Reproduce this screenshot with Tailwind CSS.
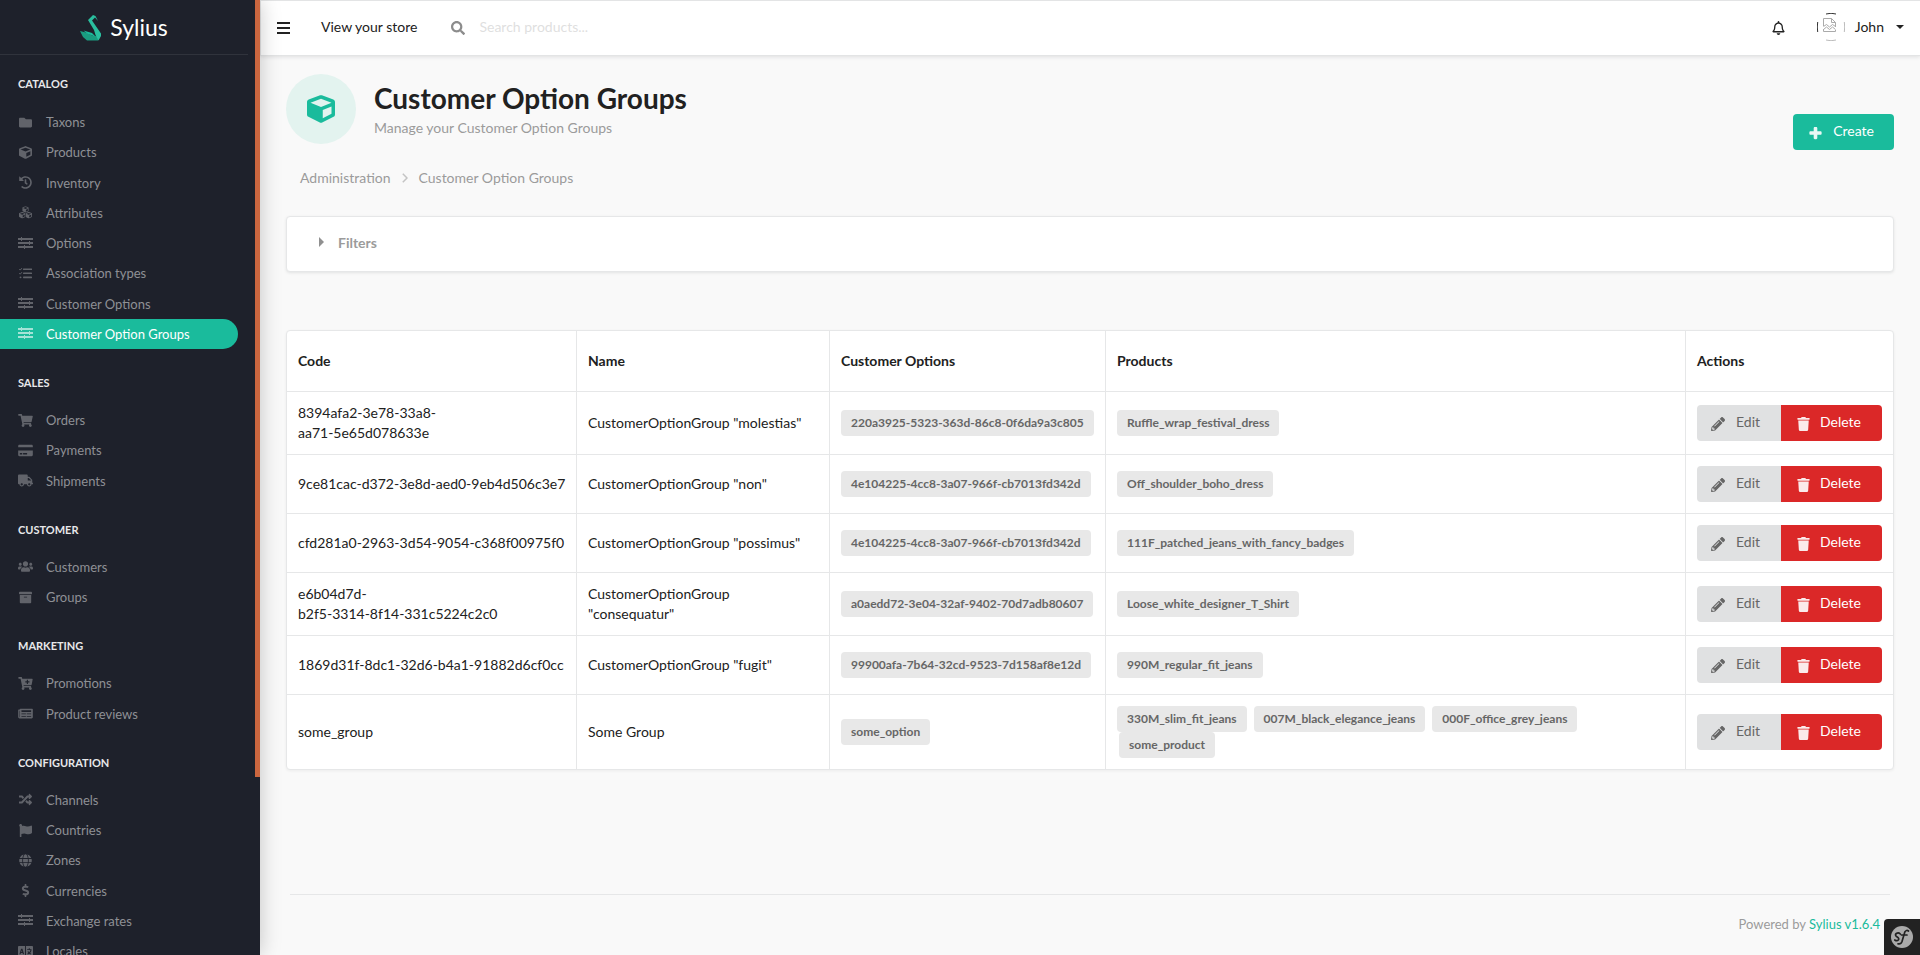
<!DOCTYPE html>
<html lang="en">
<head>
<meta charset="utf-8">
<title>Customer Option Groups | Sylius</title>
<script src="https://cdn.jsdelivr.net/npm/@tailwindcss/browser@4"></script>
</head>
<body class="h-screen overflow-hidden bg-[#f9f9f9] font-['Lato',sans-serif] text-sm leading-5 text-[#212121]">
<svg class="hidden" aria-hidden="true">
  <symbol id="folder" viewBox="0 0 512 512"><path d="M464 128H272l-64-64H48C21.5 64 0 85.500 0 112v288c0 26.500 21.500 48 48 48h416c26.500 0 48-21.500 48-48V176c0-26.500-21.500-48-48-48z"/></symbol>
  <symbol id="cube" viewBox="0 0 512 512"><path d="M239.1 6.300l-208 78c-18.700 7-31.100 25-31.100 45v225.100c0 18.200 10.300 34.800 26.500 42.900l208 104c13.500 6.800 29.400 6.800 42.900 0l208-104c16.300-8.100 26.500-24.800 26.500-42.900V129.300c0-20-12.400-37.900-31.100-44.900l-208-78C262 2.200 250 2.200 239.100 6.300zM256 68.400l192 72v1.100l-192 78-192-78v-1.100l192-72zm32 356V275.500l160-65v133.900l-160 80z"/></symbol>
  <symbol id="history" viewBox="0 0 512 512"><path d="M504 255.531c.253 136.640-111.180 248.372-247.820 248.468-59.015.042-113.223-20.530-155.822-54.911-11.077-8.940-11.905-25.541-1.839-35.607l11.267-11.267c8.609-8.609 22.353-9.551 31.891-1.984C173.062 425.135 212.781 440 256 440c101.705 0 184-82.311 184-184 0-101.705-82.311-184-184-184-48.814 0-93.149 18.969-126.068 49.932l50.754 50.754c10.080 10.080 2.941 27.314-11.313 27.314H24c-8.837 0-16-7.163-16-16V38.627c0-14.254 17.234-21.393 27.314-11.314l49.372 49.372C129.209 34.136 189.552 8 256 8c136.810 0 247.747 110.780 248 247.531zm-180.912 78.784l9.823-12.630c8.138-10.463 6.253-25.542-4.210-33.679L288 256.349V152c0-13.255-10.745-24-24-24h-16c-13.255 0-24 10.745-24 24v135.651l65.409 50.874c10.463 8.137 25.541 6.253 33.679-4.210z"/></symbol>
  <symbol id="cubes" viewBox="0 0 512 512"><use href="#cube" x="128" y="10" width="256" height="256"/><use href="#cube" x="0" y="238" width="256" height="256"/><use href="#cube" x="256" y="238" width="256" height="256"/></symbol>
  <symbol id="sliders" viewBox="0 0 15 13"><path d="M0 1h15v2H0zM0 5h15v2H0zM0 9h15v2H0zM3 0h1v4H3zM11 4h1v4h-1zM6 8h1v4H6z"/></symbol>
  <symbol id="tasks" viewBox="0 0 512 512"><path d="M176 56h320q16 0 16 16v32q0 16-16 16H176q-16 0-16-16V72q0-16 16-16zM176 216h320q16 0 16 16v32q0 16-16 16H176q-16 0-16-16v-32q0-16 16-16zM176 376h320q16 0 16 16v32q0 16-16 16H176q-16 0-16-16v-32q0-16 16-16z"/><circle cx="60" cy="408" r="38"/><path d="M10 84l38 38 68-78M10 244l38 38 68-78" fill="none" stroke="currentColor" stroke-width="38"/></symbol>
  <symbol id="cart" viewBox="0 0 576 512"><path d="M528.120 301.319l47.273-208C578.806 78.301 567.391 64 551.990 64H159.208l-9.166-44.810C147.758 8.021 137.930 0 126.529 0H24C10.745 0 0 10.745 0 24v16c0 13.255 10.745 24 24 24h69.883l70.248 343.435C147.325 417.100 136 435.222 136 456c0 30.928 25.072 56 56 56s56-25.072 56-56c0-15.674-6.447-29.835-16.824-40h209.647C430.447 426.165 424 440.326 424 456c0 30.928 25.072 56 56 56s56-25.072 56-56c0-22.172-12.888-41.332-31.579-50.405l5.517-24.276c3.413-15.018-8.002-29.319-23.403-29.319H218.117l-6.545-32h293.145c11.206 0 20.920-7.754 23.403-18.681z"/></symbol>
  <symbol id="cartplus" viewBox="0 0 576 512"><use href="#cart" width="576" height="512"/><path d="M340 110h44v60h60v44h-60v60h-44v-60h-60v-44h60z" fill="#1e212b"/></symbol>
  <symbol id="card" viewBox="0 0 576 512"><path d="M0 432c0 26.500 21.500 48 48 48h480c26.500 0 48-21.500 48-48V256H0v176zm192-68c0-6.600 5.400-12 12-12h136c6.600 0 12 5.400 12 12v40c0 6.600-5.400 12-12 12H204c-6.600 0-12-5.400-12-12v-40zm-128 0c0-6.600 5.400-12 12-12h72c6.600 0 12 5.400 12 12v40c0 6.600-5.400 12-12 12H76c-6.600 0-12-5.400-12-12v-40zM576 80v48H0V80c0-26.500 21.500-48 48-48h480c26.500 0 48 21.500 48 48z"/></symbol>
  <symbol id="truck" viewBox="0 0 640 512"><path d="M624 352h-16V243.900c0-12.700-5.100-24.900-14.100-33.900L494 110.100c-9-9-21.200-14.100-33.900-14.100H416V48c0-26.500-21.500-48-48-48H48C21.500 0 0 21.500 0 48v320c0 26.500 21.500 48 48 48h16c0 53 43 96 96 96s96-43 96-96h128c0 53 43 96 96 96s96-43 96-96h48c8.800 0 16-7.200 16-16v-32c0-8.800-7.200-16-16-16zM160 464c-26.500 0-48-21.500-48-48s21.500-48 48-48 48 21.500 48 48-21.500 48-48 48zm320 0c-26.500 0-48-21.500-48-48s21.500-48 48-48 48 21.500 48 48-21.500 48-48 48zm80-208H416V144h44.100l99.900 99.900V256z"/></symbol>
  <symbol id="users" viewBox="0 0 640 512"><path d="M96 224c35.300 0 64-28.700 64-64s-28.700-64-64-64-64 28.700-64 64 28.700 64 64 64zm448 0c35.300 0 64-28.700 64-64s-28.700-64-64-64-64 28.700-64 64 28.700 64 64 64zm32 32h-64c-17.600 0-33.500 7.100-45.100 18.600 40.300 22.100 68.900 62 75.100 109.400h66c17.700 0 32-14.300 32-32v-32c0-35.300-28.700-64-64-64zm-256 0c61.900 0 112-50.100 112-112S381.900 32 320 32 208 82.100 208 144s50.100 112 112 112zm76.800 32h-8.300c-20.800 10-43.900 16-68.500 16s-47.600-6-68.500-16h-8.300C179.600 288 128 339.600 128 403.200V432c0 26.500 21.500 48 48 48h288c26.500 0 48-21.500 48-48v-28.800c0-63.600-51.600-115.200-115.200-115.200zm-223.700-13.400C161.500 263.100 145.600 256 128 256H64c-35.300 0-64 28.700-64 64v32c0 17.700 14.300 32 32 32h65.900c6.300-47.400 34.900-87.300 75.200-109.400z"/></symbol>
  <symbol id="archive" viewBox="0 0 512 512"><path d="M32 448c0 17.700 14.300 32 32 32h384c17.700 0 32-14.300 32-32V160H32v288zm160-212c0-6.600 5.400-12 12-12h104c6.600 0 12 5.400 12 12v8c0 6.600-5.400 12-12 12H204c-6.600 0-12-5.400-12-12v-8zM480 32H32C14.300 32 0 46.300 0 64v48c0 8.800 7.200 16 16 16h480c8.800 0 16-7.200 16-16V64c0-17.700-14.300-32-32-32z"/></symbol>
  <symbol id="news" viewBox="0 0 576 512"><path d="M552 64H88c-13.255 0-24 10.745-24 24v8H24c-13.255 0-24 10.745-24 24v272c0 30.928 25.072 56 56 56h472c26.510 0 48-21.490 48-48V88c0-13.255-10.745-24-24-24zM56 400a8 8 0 0 1-8-8V144h16v248a8 8 0 0 1-8 8zm236-16H140c-6.627 0-12-5.373-12-12v-8c0-6.627 5.373-12 12-12h152c6.627 0 12 5.373 12 12v8c0 6.627-5.373 12-12 12zm208 0H348c-6.627 0-12-5.373-12-12v-8c0-6.627 5.373-12 12-12h152c6.627 0 12 5.373 12 12v8c0 6.627-5.373 12-12 12zm-208-96H140c-6.627 0-12-5.373-12-12v-8c0-6.627 5.373-12 12-12h152c6.627 0 12 5.373 12 12v8c0 6.627-5.373 12-12 12zm208 0H348c-6.627 0-12-5.373-12-12v-8c0-6.627 5.373-12 12-12h152c6.627 0 12 5.373 12 12v8c0 6.627-5.373 12-12 12zm0-96H140c-6.627 0-12-5.373-12-12v-40c0-6.627 5.373-12 12-12h360c6.627 0 12 5.373 12 12v40c0 6.627-5.373 12-12 12z"/></symbol>
  <symbol id="random" viewBox="0 0 512 512"><path d="M504.971 359.029c9.373 9.373 9.373 24.569 0 33.941l-80 79.984c-15.010 15.010-40.971 4.490-40.971-16.971V416h-58.785a12.004 12.004 0 0 1-8.773-3.812l-70.556-75.596 53.333-57.143L352 336h32v-39.981c0-21.438 25.943-31.998 40.971-16.971l80 79.981zM12 176h84l52.781 56.551 53.333-57.143-70.556-75.596A11.999 11.999 0 0 0 122.785 96H12c-6.627 0-12 5.373-12 12v56c0 6.627 5.373 12 12 12zm372 0v39.984c0 21.460 25.961 31.980 40.971 16.971l80-79.984c9.373-9.373 9.373-24.569 0-33.941l-80-79.981C409.943 24.021 384 34.582 384 56.019V96h-58.785a12.004 12.004 0 0 0-8.773 3.812L96 336H12c-6.627 0-12 5.373-12 12v56c0 6.627 5.373 12 12 12h110.785c3.326 0 6.503-1.381 8.773-3.812L352 176h32z"/></symbol>
  <symbol id="flag" viewBox="0 0 512 512"><path d="M349.565 98.783C295.978 98.783 251.721 64 184.348 64c-24.955 0-47.309 4.384-68.045 12.013a55.947 55.947 0 0 0 3.586-23.562C118.117 24.015 94.806 1.206 66.338.048 34.345-1.254 8 24.296 8 56c0 19.026 9.497 35.825 24 45.945V488c0 13.255 10.745 24 24 24h16c13.255 0 24-10.745 24-24v-94.400c28.311-12.064 63.582-22.122 114.435-22.122 53.588 0 97.844 34.783 165.217 34.783 48.169 0 86.667-16.294 122.505-40.858C506.840 359.452 512 349.571 512 339.045v-243.100c0-23.393-24.269-38.870-45.485-29.016-34.338 15.948-76.454 31.854-116.950 31.854z"/></symbol>
  <symbol id="globe" viewBox="0 0 496 512"><path d="M336.500 160C322 70.700 287.800 8 248 8s-74 62.700-88.500 152h177zM152 256c0 22.200 1.200 43.500 3.300 64h185.300c2.100-20.500 3.300-41.800 3.300-64s-1.200-43.500-3.300-64H155.300c-2.100 20.500-3.300 41.800-3.300 64zm324.700-96c-28.600-67.900-86.500-120.400-158-141.600 24.400 33.800 41.200 84.700 50 141.600h108zM177.200 18.400C105.800 39.600 47.800 92.100 19.300 160h108c8.700-56.900 25.500-107.800 49.900-141.600zM487.400 192H372.700c2.100 21 3.300 42.500 3.300 64s-1.200 43-3.300 64h114.600c5.500-20.500 8.600-41.800 8.600-64s-3.100-43.500-8.500-64zM120 256c0-21.500 1.200-43 3.300-64H8.600C3.200 212.500 0 233.800 0 256s3.200 43.500 8.600 64h114.600c-2-21-3.200-42.500-3.200-64zm39.500 96c14.500 89.300 48.700 152 88.500 152s74-62.700 88.500-152h-177zm159.300 141.600c71.400-21.200 129.400-73.700 158-141.600h-108c-8.800 56.900-25.600 107.800-50 141.600zM19.300 352c28.600 67.900 86.500 120.400 158 141.600-24.400-33.800-41.200-84.700-50-141.600h-108z"/></symbol>
  <symbol id="dollar" viewBox="0 0 288 512"><path d="M209.200 233.400l-108-31.600C88.700 198.200 80 186.500 80 173.500c0-16.300 13.200-29.500 29.500-29.500h66.300c12.200 0 24.200 3.700 34.200 10.500 6.100 4.100 14.300 3.100 19.500-2l34.800-34c7.100-6.900 6.100-18.400-1.800-24.500C238 74.800 207.400 64.100 176 64V16c0-8.800-7.200-16-16-16h-32c-8.800 0-16 7.200-16 16v48h-2.500C45.800 64-5.400 118.700.5 183.600c4.200 46.100 39.400 83.600 83.800 96.600l102.500 30c12.500 3.700 21.200 15.300 21.200 28.300 0 16.300-13.200 29.500-29.500 29.500h-66.300C100 368 88 364.300 78 357.500c-6.100-4.100-14.300-3.100-19.500 2l-34.800 34c-7.100 6.900-6.100 18.400 1.800 24.500 24.500 19.200 55.100 29.900 86.500 30v48c0 8.800 7.200 16 16 16h32c8.800 0 16-7.200 16-16v-48.200c46.600-.9 90.300-28.600 105.700-72.700 21.500-61.600-14.600-124.800-72.500-141.700z"/></symbol>
  <symbol id="language" viewBox="0 0 16 12"><path fill-rule="evenodd" d="M1 0h6.500v12H1Q0 12 0 11V1Q0 0 1 0zM3.300 3L1.500 9h1.200l.4-1.500h1.800L5.300 9h1.200L4.700 3zM4 4.600l.5 1.900h-1zM8.500 0H15q1 0 1 1v10q0 1-1 1H8.500zM11.500 2.500v1H9.700v1h3.600Q12.900 6 12 6.800L11 5.700l-.9.600L11.100 7.500l-1.300.9.700.9L12 8.300l1.500 1 .6-1-1.200-.8Q14.200 6.300 14.400 4.500v-1h-1.800v-1z"/></symbol>
  <symbol id="search" viewBox="0 0 512 512"><path d="M505 442.700L405.300 343c-4.500-4.500-10.600-7-17-7H372c27.600-35.300 44-79.700 44-128C416 93.100 322.900 0 208 0S0 93.100 0 208s93.100 208 208 208c48.300 0 92.700-16.400 128-44v16.300c0 6.400 2.500 12.500 7 17l99.700 99.700c9.400 9.400 24.600 9.400 33.900 0l28.300-28.300c9.400-9.400 9.400-24.600.1-34zM208 336c-70.700 0-128-57.200-128-128 0-70.700 57.200-128 128-128 70.700 0 128 57.200 128 128 0 70.700-57.200 128-128 128z"/></symbol>
  <symbol id="bell" viewBox="0 0 448 512"><path d="M439.390 362.290c-19.320-20.760-55.470-51.990-55.470-154.290 0-77.700-54.480-139.900-127.940-155.160V32c0-17.670-14.320-32-31.980-32s-31.980 14.330-31.980 32v20.840C118.560 68.100 64.080 130.300 64.080 208c0 102.300-36.150 133.530-55.470 154.290-6 6.450-8.660 14.160-8.610 21.710.11 16.400 12.980 32 32.100 32h383.800c19.120 0 32-15.600 32.100-32 .05-7.550-2.610-15.270-8.610-21.710zM67.530 368c21.220-27.970 44.420-74.330 44.530-159.420 0-.2-.06-.38-.06-.58 0-61.860 50.140-112 112-112s112 50.140 112 112c0 .2-.06.38-.06.58.11 85.100 23.310 131.460 44.530 159.420H67.530zM224 512c35.320 0 63.970-28.650 63.970-64H160.030c0 35.350 28.650 64 63.970 64z"/></symbol>
  <symbol id="pencil" viewBox="0 0 512 512"><path d="M497.900 142.100l-46.100 46.100c-4.700 4.700-12.300 4.700-17 0l-111-111c-4.700-4.700-4.700-12.300 0-17l46.100-46.100c18.700-18.700 49.100-18.700 67.900 0l60.100 60.100c18.800 18.700 18.800 49.100 0 67.900zM284.200 99.800L21.600 362.400.4 483.900c-2.900 16.400 11.400 30.600 27.800 27.800l121.500-21.300 262.600-262.600c4.700-4.700 4.700-12.300 0-17l-111-111c-4.800-4.700-12.400-4.700-17.100 0zM124.100 339.900c-5.500-5.500-5.500-14.300 0-19.800l154-154c5.500-5.500 14.300-5.500 19.800 0s5.500 14.300 0 19.800l-154 154c-5.500 5.500-14.300 5.500-19.800 0zM88 424h48v36.300l-64.500 11.300-31.100-31.100L51.700 376H88v48z"/></symbol>
  <symbol id="trash" viewBox="0 0 448 512"><path d="M432 32H312l-9.400-18.700A24 24 0 0 0 281.100 0H166.800a23.720 23.720 0 0 0-21.400 13.300L136 32H16A16 16 0 0 0 0 48v32a16 16 0 0 0 16 16h416a16 16 0 0 0 16-16V48a16 16 0 0 0-16-16zM53.200 467a48 48 0 0 0 47.900 45h245.800a48 48 0 0 0 47.900-45L416 128H32z"/></symbol>
  <symbol id="plus" viewBox="0 0 448 512"><path d="M408 190H290V72c0-22-18-40-40-40h-52c-22 0-40 18-40 40v118H40c-22 0-40 18-40 40v52c0 22 18 40 40 40h118v118c0 22 18 40 40 40h52c22 0 40-18 40-40V322h118c22 0 40-18 40-40v-52c0-22-18-40-40-40z"/></symbol>
</svg>

<div class="flex h-full">
  <aside class="relative z-10 w-[260px] shrink-0 overflow-hidden bg-[#1e212b] text-[13px] leading-tight shadow-[0_0_20px_rgba(0,0,0,0.22)]">
    <div class="absolute top-0 right-0 h-[777px] w-[5px] bg-[#cb663f]"></div>
    <a href="#" class="mr-3 flex h-[55px] items-center justify-center gap-2 border-b border-[#30333c] text-[23px] text-white">
      <svg class="h-[27px] w-[22px]" viewBox="0 0 22 27"><path fill="#1a9c80" d="M0 17l6 1.500L13 22l7 .5-2 4H7L3 23z"/><path fill="#2abf9f" d="M8 6l5-5 2.500 1L18 7l-3-3.500-3 3L21 19.500V22l-2.500 4.500-3-5.500L14 16z"/><path fill="#1abb9c" d="M3.500 16.500L12 19l4 4-9-3.500z"/></svg>
      <span>Sylius</span>
    </a>
    <nav>
      <h2 class="px-[18px] pt-[21px] pb-4 text-[11px] leading-[15px] font-bold text-[#e8e8ea]">CATALOG</h2>
      <ul class="text-[#8e9095]">
        <li><a href="#" class="flex items-center gap-[13px] py-[7px] pl-[18px]"><svg class="h-[13px] w-[15px] fill-current opacity-60"><use href="#folder"/></svg>Taxons</a></li>
        <li><a href="#" class="flex items-center gap-[13px] py-[7px] pl-[18px]"><svg class="h-[13px] w-[15px] fill-current opacity-60"><use href="#cube"/></svg>Products</a></li>
        <li><a href="#" class="flex items-center gap-[13px] py-[7px] pl-[18px]"><svg class="h-[13px] w-[15px] fill-current opacity-60"><use href="#history"/></svg>Inventory</a></li>
        <li><a href="#" class="flex items-center gap-[13px] py-[7px] pl-[18px]"><svg class="h-[13px] w-[15px] fill-current opacity-60"><use href="#cubes"/></svg>Attributes</a></li>
        <li><a href="#" class="flex items-center gap-[13px] py-[7px] pl-[18px]"><svg class="h-[13px] w-[15px] fill-current opacity-60"><use href="#sliders"/></svg>Options</a></li>
        <li><a href="#" class="flex items-center gap-[13px] py-[7px] pl-[18px]"><svg class="h-[13px] w-[15px] fill-current opacity-60"><use href="#tasks"/></svg>Association types</a></li>
        <li><a href="#" class="flex items-center gap-[13px] py-[7px] pl-[18px]"><svg class="h-[13px] w-[15px] fill-current opacity-60"><use href="#sliders"/></svg>Customer Options</a></li>
        <li><a href="#" aria-current="page" class="mr-[22px] flex items-center gap-[13px] rounded-r-full bg-[#1abb9c] py-[7px] pl-[18px] text-white"><svg class="h-[13px] w-[15px] fill-current opacity-60"><use href="#sliders"/></svg>Customer Option Groups</a></li>
      </ul>
      <h2 class="px-[18px] pt-[26px] pb-[15px] text-[11px] leading-[15px] font-bold text-[#e8e8ea]">SALES</h2>
      <ul class="text-[#8e9095]">
        <li><a href="#" class="flex items-center gap-[13px] py-[7px] pl-[18px]"><svg class="h-[13px] w-[15px] fill-current opacity-60"><use href="#cart"/></svg>Orders</a></li>
        <li><a href="#" class="flex items-center gap-[13px] py-[7px] pl-[18px]"><svg class="h-[13px] w-[15px] fill-current opacity-60"><use href="#card"/></svg>Payments</a></li>
        <li><a href="#" class="flex items-center gap-[13px] py-[7px] pl-[18px]"><svg class="h-[13px] w-[15px] fill-current opacity-60"><use href="#truck"/></svg>Shipments</a></li>
      </ul>
      <h2 class="px-[18px] pt-[26px] pb-[15px] text-[11px] leading-[15px] font-bold text-[#e8e8ea]">CUSTOMER</h2>
      <ul class="text-[#8e9095]">
        <li><a href="#" class="flex items-center gap-[13px] py-[7px] pl-[18px]"><svg class="h-[13px] w-[15px] fill-current opacity-60"><use href="#users"/></svg>Customers</a></li>
        <li><a href="#" class="flex items-center gap-[13px] py-[7px] pl-[18px]"><svg class="h-[13px] w-[15px] fill-current opacity-60"><use href="#archive"/></svg>Groups</a></li>
      </ul>
      <h2 class="px-[18px] pt-[26px] pb-[15px] text-[11px] leading-[15px] font-bold text-[#e8e8ea]">MARKETING</h2>
      <ul class="text-[#8e9095]">
        <li><a href="#" class="flex items-center gap-[13px] py-[7px] pl-[18px]"><svg class="h-[13px] w-[15px] fill-current opacity-60"><use href="#cartplus"/></svg>Promotions</a></li>
        <li><a href="#" class="flex items-center gap-[13px] py-[7px] pl-[18px]"><svg class="h-[13px] w-[15px] fill-current opacity-60"><use href="#news"/></svg>Product reviews</a></li>
      </ul>
      <h2 class="px-[18px] pt-[26px] pb-[15px] text-[11px] leading-[15px] font-bold text-[#e8e8ea]">CONFIGURATION</h2>
      <ul class="text-[#8e9095]">
        <li><a href="#" class="flex items-center gap-[13px] py-[7px] pl-[18px]"><svg class="h-[13px] w-[15px] fill-current opacity-60"><use href="#random"/></svg>Channels</a></li>
        <li><a href="#" class="flex items-center gap-[13px] py-[7px] pl-[18px]"><svg class="h-[13px] w-[15px] fill-current opacity-60"><use href="#flag"/></svg>Countries</a></li>
        <li><a href="#" class="flex items-center gap-[13px] py-[7px] pl-[18px]"><svg class="h-[13px] w-[15px] fill-current opacity-60"><use href="#globe"/></svg>Zones</a></li>
        <li><a href="#" class="flex items-center gap-[13px] py-[7px] pl-[18px]"><svg class="h-[13px] w-[15px] fill-current opacity-60"><use href="#dollar"/></svg>Currencies</a></li>
        <li><a href="#" class="flex items-center gap-[13px] py-[7px] pl-[18px]"><svg class="h-[13px] w-[15px] fill-current opacity-60"><use href="#sliders"/></svg>Exchange rates</a></li>
        <li><a href="#" class="flex items-center gap-[13px] py-[7px] pl-[18px]"><svg class="h-[13px] w-[15px] fill-current opacity-60"><use href="#language"/></svg>Locales</a></li>
      </ul>
    </nav>
  </aside>

  <div class="flex min-w-0 flex-1 flex-col">
    <header class="flex h-14 shrink-0 items-center border border-r-0 border-[#e3e4e5] bg-white pr-4 pl-4 shadow-[0_1px_4px_rgba(34,36,38,0.12)]">
      <button type="button" aria-label="Toggle menu" class="mr-[31px]"><svg class="h-3 w-[13px]" viewBox="0 0 13 12"><path fill="#222" d="M0 0h13v2H0zM0 5h13v2H0zM0 10h13v2H0z"/></svg></button>
      <a href="#" class="mr-[34px] pb-0.5">View your store</a>
      <label for="search" class="mr-3.5"><svg class="h-3.5 w-3.5 fill-[#8c8c8c]"><use href="#search"/></svg></label>
      <input id="search" type="search" placeholder="Search products..." class="mr-auto w-60 pb-0.5 outline-none placeholder:text-[#dfdfdf]">
      <button type="button" aria-label="Notifications" class="mr-8"><svg class="h-3.5 w-[13px] fill-[#222]"><use href="#bell"/></svg></button>
      <button type="button" class="flex items-center pb-0.5">
        <svg class="mr-2.5 h-7 w-7" viewBox="0 0 28 28" fill="none"><g stroke="#aaa"><path d="M6.500 13V5.500h8l4 4V14M14.500 5.500v4h4M6.500 16v2.500h12V17"/><path d="M6.500 13.500l3-2 3 2.500 3-2.500 3 2M6.500 16.500l3-2.500 3 2.500 3-2.500 3 2.500"/></g><path stroke="#333" d="M.7 9q-.8 5 0 10M9 1q5-1.500 10 0"/><path stroke="#bbb" d="M27.300 9q.8 5 0 10M9 27q5 1.500 10 0"/></svg>
        John
        <svg class="ml-3 h-1 w-2" viewBox="0 0 8 4"><path fill="#222" d="M0 0h8L4 4z"/></svg>
      </button>
    </header>

    <main class="flex min-h-0 flex-1 flex-col pr-[26px] pl-[26px]">
      <div class="mt-[18px] flex items-start">
        <div class="mr-[18px] flex h-[70px] w-[70px] items-center justify-center rounded-full bg-[#e3f3ef]"><svg class="h-7 w-7 fill-[#1abb9c]"><use href="#cube"/></svg></div>
        <div class="flex-1">
          <h1 class="mt-1.5 text-[28px] leading-9 font-bold">Customer Option Groups</h1>
          <p class="mt-0.5 text-[#9b9b9b]">Manage your Customer Option Groups</p>
        </div>
        <button type="button" class="mt-10 flex h-9 items-center rounded bg-[#1abb9c] pr-5 pl-4 text-white"><svg class="mt-0.5 mr-[11px] h-3.5 w-[13px] fill-current opacity-90"><use href="#plus"/></svg><span class="pb-0.5">Create</span></button>
      </div>
      <nav aria-label="Breadcrumb" class="mt-[18px] ml-3.5 flex items-center text-[#9b9b9b]">
        <a href="#">Administration</a>
        <svg class="mx-[11px] h-2.5 w-1.5" viewBox="0 0 6 10"><path d="M.8.8L5 5 .8 9.200" fill="none" stroke="#c4c4c4" stroke-width="1.500"/></svg>
        <span>Customer Option Groups</span>
      </nav>
      <section class="mt-7 rounded border border-[#e6e7e8] bg-white shadow-[0_1px_3px_rgba(34,36,38,0.1)]">
        <button type="button" aria-expanded="false" class="flex w-full items-center pt-4 pb-[18px] pl-8 font-bold text-[#9b9b9b]"><svg class="mr-3.5 mb-0.5 h-2.5 w-[5px]" viewBox="0 0 5 10"><path fill="#909090" d="M0 0l5 5-5 5z"/></svg>Filters</button>
      </section>

      <table class="mt-[58px] w-full table-fixed border-separate border-spacing-0 rounded border border-[#e6e7e8] bg-white text-left shadow-[0_1px_3px_rgba(34,36,38,0.06)] [&_td]:border-t [&_td]:border-l [&_td]:border-[#e6e7e8] [&_td]:px-[11px] [&_td]:py-[11px] [&_td:first-child]:border-l-0 [&_td:first-child]:whitespace-nowrap [&_th]:border-l [&_th]:border-[#e6e7e8] [&_th]:px-[11px] [&_th]:py-5 [&_th:first-child]:border-l-0">
        <thead><tr><th class="w-[289px]">Code</th><th class="w-[253px]">Name</th><th class="w-[276px]">Customer Options</th><th>Products</th><th class="w-[208px]">Actions</th></tr></thead>
        <tbody></tbody>
      </table>

      <footer class="mx-1 mt-auto border-t border-[#e6e7e8] pt-[19px] pr-2.5 pb-[21px] text-right text-[13px] text-[#9b9b9b]">Powered by <a href="#" class="text-[#1abb9c]">Sylius v1.6.4</a></footer>
    </main>
  </div>
</div>

<button type="button" aria-label="Open debug toolbar" class="fixed right-0 bottom-0 z-20 flex h-9 w-9 items-center justify-center rounded-tl bg-[#222]">
  <svg class="h-[22px] w-[22px]" viewBox="0 0 22 22"><circle cx="11" cy="11" r="11" fill="#aaa"/><path d="M9.300 8Q7.500 6.200 5.300 7.500 3.600 9 5.500 10.500 8.500 12 7.500 13.800 6 15.500 3.800 14M17.500 5Q15.500 3.500 13.800 6L11 15.500Q10 18.500 7 17.800M10.500 9h5.500" fill="none" stroke="#222" stroke-width="1.700" stroke-linecap="round"/></svg>
</button>

<script>
  const rows = [
    ['8394afa2-3e78-33a8-<br>aa71-5e65d078633e', 'CustomerOptionGroup "molestias"', ['220a3925-5323-363d-86c8-0f6da9a3c805'], ['Ruffle_wrap_festival_dress']],
    ['9ce81cac-d372-3e8d-aed0-9eb4d506c3e7', 'CustomerOptionGroup "non"', ['4e104225-4cc8-3a07-966f-cb7013fd342d'], ['Off_shoulder_boho_dress']],
    ['cfd281a0-2963-3d54-9054-c368f00975f0', 'CustomerOptionGroup "possimus"', ['4e104225-4cc8-3a07-966f-cb7013fd342d'], ['111F_patched_jeans_with_fancy_badges']],
    ['e6b04d7d-<br>b2f5-3314-8f14-331c5224c2c0', 'CustomerOptionGroup "consequatur"', ['a0aedd72-3e04-32af-9402-70d7adb80607'], ['Loose_white_designer_T_Shirt']],
    ['1869d31f-8dc1-32d6-b4a1-91882d6cf0cc', 'CustomerOptionGroup "fugit"', ['99900afa-7b64-32cd-9523-7d158af8e12d'], ['990M_regular_fit_jeans']],
    ['some_group', 'Some Group', ['some_option'], ['330M_slim_fit_jeans', '007M_black_elegance_jeans', '000F_office_grey_jeans', 'some_product']],
  ];
  const labels = list => '<div class="max-w-[500px] text-xs leading-3 font-bold text-[#666]">' + list.map(t =>
    `<span class="mx-0.5 inline-block rounded bg-[#e8e8e8] px-2.5 py-[7px] align-top whitespace-nowrap first:ml-0">${t}</span>`).join(' ') + '</div>';
  document.querySelector('tbody').innerHTML = rows.map(([code, name, options, products]) => `<tr>
    <td>${code}</td><td>${name}</td><td>${labels(options)}</td><td>${labels(products)}</td>
    <td><div class="flex">
      <button type="button" class="flex h-9 w-[84px] items-center rounded-l bg-[#e0e1e2] pl-3.5 text-[#666]"><svg class="mt-0.5 mr-[11px] h-3.5 w-3.5 fill-current"><use href="#pencil"/></svg><span class="pb-0.5">Edit</span></button>
      <button type="button" class="flex h-9 flex-1 items-center rounded-r bg-[#db2828] pl-4 text-white"><svg class="mt-0.5 mr-2.5 h-3.5 w-[13px] fill-current opacity-90"><use href="#trash"/></svg><span class="pb-0.5">Delete</span></button>
    </div></td></tr>`).join('');
</script>
</body>
</html>
